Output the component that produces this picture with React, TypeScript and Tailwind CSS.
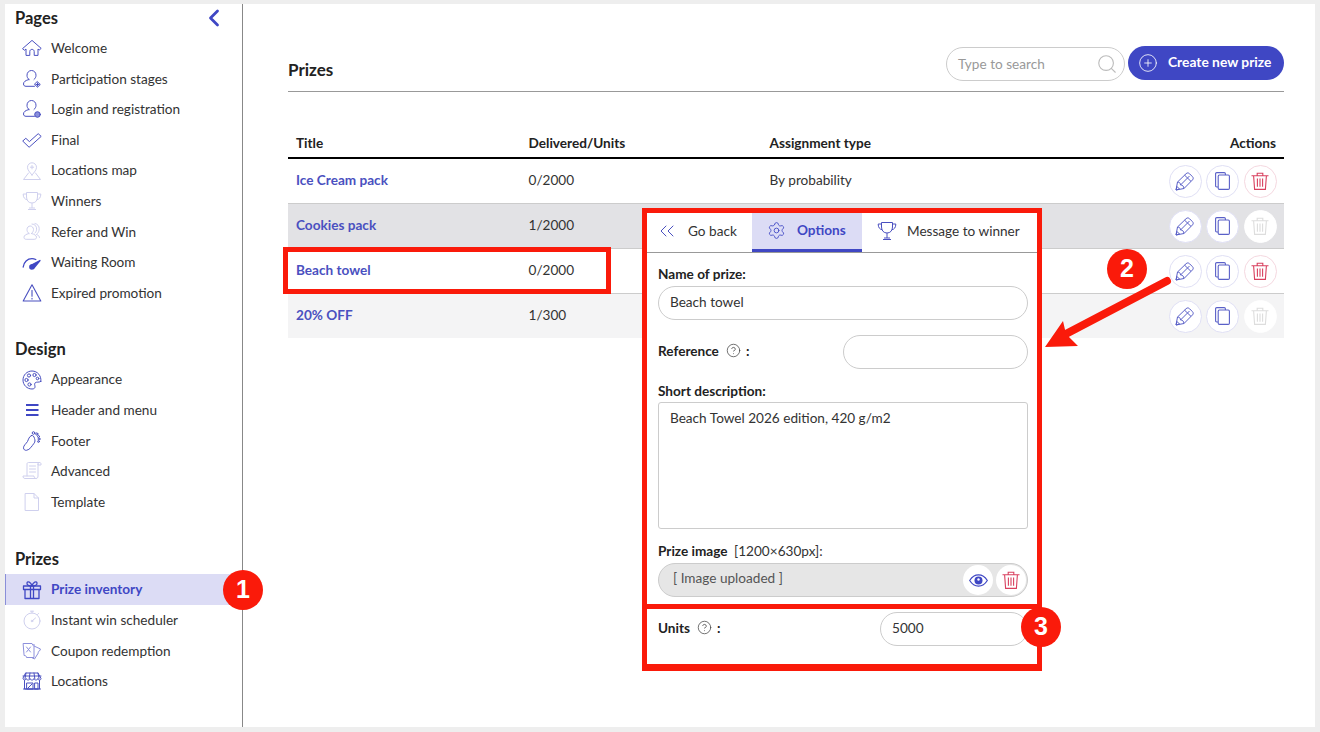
import React from 'react';
import { ChevronLeft, ChevronsLeft, Settings, Search, CirclePlus, CircleHelp } from 'lucide-react';

type IconProps = { className?: string };

const solid = 'text-[#4a50c0]';
const pale = 'text-[#cfd0ee]';

function NavIcon({ className, width = 1, children }: { className: string; width?: number; children: React.ReactNode }) {
  return (
    <svg viewBox="0 0 20 20" className={`h-[20px] w-[20px] ${className}`} fill="none" stroke="currentColor" strokeWidth={width} strokeLinejoin="round" strokeLinecap="round">
      {children}
    </svg>
  );
}

function PencilIcon({ className }: IconProps) {
  return (
    <svg viewBox="0 0 20 20" className={className} fill="none" stroke="currentColor" strokeWidth="1" strokeLinejoin="round">
      <path d="M1 19 2.500 11 11 2.800c1.200-1.200 2.400-1.200 3.600 0l2.800 2.800c1.100 1.100 1.100 2.300 0 3.400L9 17.500Z" />
      <path d="M2.500 11c2 .2 3 1 3 3 2 0 3.200 1 3.500 3.500M5.500 14 14.500 5M9.600 4.200 16 10.400M1 19l3.500-1-2.500-2.500Z" />
    </svg>
  );
}

function CopyIcon({ className }: IconProps) {
  return (
    <svg viewBox="0 0 15 18" className={className} fill="none" stroke="currentColor" strokeWidth="1.100">
      <path d="M3 15H1.800C1 15 .6 14.600 .6 13.800V1.800C.6 1 1 .6 1.800 .6h7.400c.8 0 1.200.4 1.200 1.200V3" />
      <rect x="3.200" y="3" width="11.200" height="14.400" rx="1.200" />
    </svg>
  );
}

function TrashIcon({ className }: IconProps) {
  return (
    <svg viewBox="0 0 20 20" className={className} fill="none" stroke="currentColor" strokeWidth="1.100">
      <path d="M1.500 4.800h17M7.200 4.600V2.200h5.600v2.400M3.600 4.800 4.600 18.400h10.800l1-13.600" />
      <path d="M7.400 7.600v8.200M10 7.600v8.200M12.600 7.600v8.200" />
    </svg>
  );
}

function EyeIcon({ className }: IconProps) {
  return (
    <svg viewBox="0 0 20 14" className={className}>
      <path d="M0.500 7C3 3 6.300 1 10 1s7 2 9.500 6c-2.500 4-5.800 6-9.500 6S3 11 .5 7Z" fill="none" stroke="currentColor" strokeWidth="1.300" />
      <circle cx="10" cy="7" r="4.300" fill="currentColor" />
      <circle cx="10" cy="6" r="1.300" fill="white" />
    </svg>
  );
}

function TrophyIcon({ className }: IconProps) {
  return (
    <svg viewBox="0 0 20 20" className={className} fill="none" stroke="currentColor" strokeWidth="1" strokeLinejoin="round">
      <path d="M4.500 1.500h11V6c0 3.600-2.200 6-5.500 6S4.500 9.600 4.500 6Z" />
      <path d="M4.500 3H1.200c0 3.400 1.400 5.400 4.200 5.800M15.500 3h3.300c0 3.400-1.400 5.400-4.200 5.800M10 12v5M6 18.500h8M7 17h6" />
    </svg>
  );
}

const pages = [
  {
    label: 'Welcome',
    icon: (
      <NavIcon className={solid}>
        <path d="M.8 10.400 10 2.400l9.200 8-2 1.600-1.200-1v6.400h-3.800v-3.800c0-3-4.400-3-4.400 0v3.800H4V11l-1.200 1Z" />
      </NavIcon>
    ),
  },
  {
    label: 'Participation stages',
    icon: (
      <NavIcon className={solid}>
        <path d="M7 10.500C5.600 9.500 5 8 5 6.200 5 3.500 7 1.500 9.500 1.500s4.500 2 4.500 4.700c0 1.800-.7 3.300-2 4.300" />
        <path d="M7 10.500c-3.500.8-5.500 2.300-5.500 4.500 0 1.500 1 2.300 2.500 2.300h8.500" />
        <path d="M15.500 12.800l2.800 2.700-2.800 2.700-2.800-2.700ZM15.500 14v3M14 15.500h3" />
      </NavIcon>
    ),
  },
  {
    label: 'Login and registration',
    icon: (
      <NavIcon className={solid}>
        <path d="M7 10.500C5.600 9.500 5 8 5 6.200 5 3.500 7 1.500 9.500 1.500s4.500 2 4.500 4.700c0 1.800-.7 3.300-2 4.300" />
        <path d="M7 10.500c-3.500.8-5.500 2.300-5.500 4.500 0 1.500 1 2.300 2.500 2.300h8.500" />
        <circle cx="15.500" cy="15.500" r="2.800" fill="#8a8fdc" />
      </NavIcon>
    ),
  },
  {
    label: 'Final',
    icon: (
      <NavIcon className={solid}>
        <path d="M1 10.800 3.800 8.300l3.600 3.300 8.800-7.900 3 2.700L7.400 17Z" />
      </NavIcon>
    ),
  },
  {
    label: 'Locations map',
    icon: (
      <NavIcon className={pale}>
        <path d="M10 14C7.500 11 5.500 8.800 5.500 6.300a4.500 4.500 0 0 1 9 0C14.500 8.800 12.500 11 10 14Z" />
        <path d="M10 4.500v3.400M8.300 6.200h3.400M6.500 12 1.500 18.500h17L13.500 12" />
      </NavIcon>
    ),
  },
  { label: 'Winners', icon: <TrophyIcon className={`h-[20px] w-[20px] ${pale}`} /> },
  {
    label: 'Refer and Win',
    icon: (
      <NavIcon className={pale}>
        <path d="M7 11.500C5.500 10.500 5 9 5 7.500 5 5.500 6.500 4 8.200 4s3.300 1.500 3.300 3.500c0 1.500-.7 3-2 4" />
        <path d="M7 11.500c-3.200.8-5 1.900-5 3.800 0 1.200.7 2 2.200 2h8c1.500 0 2.300-.8 2.300-2 0-1.900-2-3-5-3.800" />
        <path d="M10 2c3 0 4.800 2.400 4.600 5.200-.1 1.500-.5 2.800-1.600 3.800M13 1.500c2.700.5 4.200 2.700 4.200 5.200 0 2-.6 3.600-1.800 4.800M14.500 12.500c1.800.6 3 1.600 3 3" />
      </NavIcon>
    ),
  },
  {
    label: 'Waiting Room',
    icon: (
      <NavIcon className="text-[#3f47c4]" width={1.300}>
        <path d="M1.200 15c.6-5 4.200-8.300 8.800-8.300 1.400 0 2.600.3 3.800.8" />
        <path d="M8.500 13.500 18 8.500l-6.500 8Z" fill="currentColor" />
        <circle cx="9.800" cy="15" r="2" fill="currentColor" />
      </NavIcon>
    ),
  },
  {
    label: 'Expired promotion',
    icon: (
      <NavIcon className={solid} width={1.100}>
        <path d="M10 1.800 18.800 18H1.200Z" />
        <path d="M10 7.500v5.800" />
        <path d="M10 15.200v.8" />
      </NavIcon>
    ),
  },
];

const design = [
  {
    label: 'Appearance',
    icon: (
      <NavIcon className={solid}>
        <path d="M18.800 11.500C19.800 6 15.500 1 10 1 5 1 1 5 1 10s4 9 9 9c2.200 0 3-1 3-2.200 0-1.500-1-2.800.2-4 1.200-1.200 3.800-.1 5.600-1.300Z" />
        <circle cx="7" cy="5.500" r="1.600" />
        <circle cx="12.500" cy="5" r="1.600" />
        <circle cx="4.500" cy="10" r="1.600" />
        <circle cx="7.500" cy="14.500" r="1.600" />
        <circle cx="15.500" cy="8.500" r="1.300" />
      </NavIcon>
    ),
  },
  {
    label: 'Header and menu',
    icon: (
      <NavIcon className="text-[#3f47c4]" width={2}>
        <path d="M4 5h12.500M4 10h12.500M4 15h12.500" strokeLinecap="butt" />
      </NavIcon>
    ),
  },
  {
    label: 'Footer',
    icon: (
      <NavIcon className={solid}>
        <path d="M9.500 4.500C7 5.500 6.500 8.500 5.500 10.500 4 12.800 1.500 14.500 1.500 16.800c0 1.700 1.300 2.700 3 2.500 3.500-.5 5.500-4.500 7.500-7 1.200-1.500 1.200-3 .5-4.800C12 5.500 11 4 9.500 4.500Z" />
        <circle cx="11.500" cy="2" r="1.300" />
        <circle cx="14.800" cy="3" r="1.100" />
        <circle cx="16.500" cy="5.500" r="1" />
        <circle cx="17" cy="8" r="1" />
        <circle cx="16.500" cy="10.500" r=".9" />
      </NavIcon>
    ),
  },
  {
    label: 'Advanced',
    icon: (
      <NavIcon className={pale}>
        <path d="M5 15V3c0-1 .6-1.500 1.500-1.500h11c1 0 1.500.7 1.500 1.500v1h-3V3M17.500 1.500c-1 0-1.500.7-1.500 1.500v12c0 1.500-.6 2.500-2 2.500H3c-1.300 0-2-1-2-2.500h11c0 1 .5 2.500 2 2.500" />
        <path d="M7.500 5h6M7.500 8h6M7.500 11h6" />
      </NavIcon>
    ),
  },
  {
    label: 'Template',
    icon: (
      <NavIcon className={pale}>
        <path d="M3.500 1.500h8.500l4.500 4.500v12.500h-13Z" />
        <path d="M12 1.500V6h4.500" />
      </NavIcon>
    ),
  },
];

const prizes = [
  {
    label: 'Prize inventory',
    icon: (
      <NavIcon className="text-[#3f47c4]" width={1.300}>
        <path d="M1.500 6h17v3.500h-17ZM3 9.500v9h14v-9M8.500 6v12.500M11.500 6v12.500" />
        <path d="M10 6C7 6 4.500 5 5 2.800 5.500.8 9 2 10 6c1-4 4.500-5.200 5-3.200C15.500 5 13 6 10 6Z" />
      </NavIcon>
    ),
    active: true,
  },
  {
    label: 'Instant win scheduler',
    icon: (
      <NavIcon className={pale}>
        <circle cx="10" cy="11" r="8" />
        <path d="M10 3V1.200M8.500 1.200h3M10 11l3.500-3M15.500 4.500l1-1" />
        <circle cx="10" cy="11" r=".8" />
      </NavIcon>
    ),
  },
  {
    label: 'Coupon redemption',
    icon: (
      <NavIcon className="text-[#8d90dc]">
        <path d="M1.500 2.500h8.500l1 1.800 1-1v13.200H4.500c0-1.500-1-2-2-2Z" />
        <path d="M12 5l6.500 3-1 2c-1 0-1.500 1-1.200 2l-3.800 6-3-1.500" />
        <path d="M4.500 6l4 5M8.500 6l-4 5" />
      </NavIcon>
    ),
  },
  {
    label: 'Locations',
    icon: (
      <NavIcon className={solid}>
        <path d="M4 2h12l3 5.500c0 2-3 2-3.200 0 0 2-3.600 2-3.800 0 0 2-3.800 2-4 0 0 2-3.600 2-3.800 0C4 9.500 1 9.500 1 7.500Z" />
        <path d="M4 2 3 7.500M8 2l-.8 5.500M12 2l.8 5.500M16 2l1 5.500M1 5h18M2.500 9.500V18h15V9.500M1.500 18h17" />
        <path d="M5 12h6v6H5ZM13 12h3v6h-3ZM6 17l4-4" />
      </NavIcon>
    ),
  },
];

const rows = [
  { title: 'Ice Cream pack', units: '0/2000', type: 'By probability', cls: 'h-[45px] border-b border-[#ccc] bg-white', canDelete: true },
  { title: 'Cookies pack', units: '1/2000', type: '', cls: 'h-[45px] border-b border-[#ccc] bg-[#e2e2e5]', canDelete: false },
  { title: 'Beach towel', units: '0/2000', type: '', cls: 'h-[45px] border-b border-[#ccc] bg-white', canDelete: true },
  { title: '20% OFF', units: '1/300', type: '', cls: 'h-[44px] bg-[#f4f4f5]', canDelete: false },
];

function NavGroup({ title, items, className }: { title: string; items: { label: string; icon: React.ReactNode; active?: boolean }[]; className?: string }) {
  return (
    <div className={className}>
      <h3 className="flex h-[29px] items-center pl-[10px] text-[16.500px] font-bold text-[#222]">{title}</h3>
      {items.map((item) => (
        <div
          key={item.label}
          className={
            item.active
              ? 'flex h-[30.6px] items-center gap-[9px] border-l border-[#8a8fd8] bg-[#dcdcf5] pl-[16px] text-[13.6px] font-bold text-[#3f47c4]'
              : 'flex h-[30.6px] items-center gap-[9px] pl-[17px] text-[13.6px] text-[#333]'
          }
        >
          <span className="flex w-[20px] justify-center">{item.icon}</span>
          <span>{item.label}</span>
        </div>
      ))}
    </div>
  );
}

function ActionButton({ children, tone }: { children: React.ReactNode; tone?: 'danger' | 'off' }) {
  const toneCls =
    tone === 'danger' ? 'border-[#f5d8e0] bg-white' : tone === 'off' ? 'border-white bg-white' : 'border-[#e0e0f5] bg-white';
  return <button className={`flex h-[33px] w-[33px] items-center justify-center rounded-full border ${toneCls}`}>{children}</button>;
}

function Badge({ n, className }: { n: number; className: string }) {
  return (
    <div
      className={`absolute flex h-[40px] w-[40px] items-center justify-center rounded-full bg-[#fa1a0a] font-['Liberation_Sans',sans-serif] text-[25px] font-bold text-white ${className}`}
    >
      {n}
    </div>
  );
}

export default function App() {
  return (
    <div className="relative h-[732px] w-[1320px] overflow-hidden bg-[#eeeeee] pb-[5px] pl-[5px] pr-[5px] pt-[4px] font-['Lato',sans-serif] text-[#333]">
      <div className="flex h-full bg-white">
        <aside className="relative w-[238px] shrink-0 border-r border-[#888]">
          <ChevronLeft className="absolute left-[195px] top-0 h-[28px] w-[28px] text-[#3f47c4]" strokeWidth={2.400} />
          <NavGroup title="Pages" items={pages} />
          <NavGroup title="Design" items={design} className="mt-[27px]" />
          <NavGroup title="Prizes" items={prizes} className="mt-[28px]" />
        </aside>

        <main className="min-w-0 flex-1 pl-[45px] pr-[31px] pt-[42px]">
          <div className="flex h-[46px] items-start justify-between border-b border-[#999]">
            <h1 className="mt-[15px] text-[17px] font-bold leading-[18px] text-[#222]">Prizes</h1>
            <div className="flex gap-[3px]">
              <div className="mt-[1px] flex h-[34px] w-[179px] items-center justify-between rounded-full border border-[#ccc] pl-[11px] pr-[6px] text-[13.6px] text-[#999]">
                <span>Type to search</span>
                <Search className="h-[22px] w-[22px] text-[#bbb]" strokeWidth={1.200} />
              </div>
              <button className="flex h-[34px] w-[156px] items-center gap-[10px] rounded-full bg-[#3f47c4] pb-[1px] pl-[10px] text-[13.800px] font-bold text-white">
                <CirclePlus className="h-[20px] w-[20px]" strokeWidth={1} />
                Create new prize
              </button>
            </div>
          </div>

          <div className="mt-[37px]">
            <div className="grid h-[30px] grid-cols-[232.5px_241px_1fr_auto] items-center border-b-2 border-black px-2 text-[13.6px] font-bold text-[#222]">
              <span>Title</span>
              <span>Delivered/Units</span>
              <span>Assignment type</span>
              <span>Actions</span>
            </div>
            {rows.map((row) => (
              <div key={row.title} className={`grid grid-cols-[232.5px_241px_1fr_auto] items-center px-2 text-[13.6px] ${row.cls}`}>
                <span className="pb-[2px] font-bold text-[#4a50c0]">{row.title}</span>
                <span className="pb-[2px]">{row.units}</span>
                <span className="pb-[2px]">{row.type}</span>
                <span className="-mr-[0.5px] flex gap-[4.5px]">
                  <ActionButton>
                    <PencilIcon className="h-[20px] w-[20px] text-[#5a60c8]" />
                  </ActionButton>
                  <ActionButton>
                    <CopyIcon className="h-[18px] w-[15px] text-[#5a60c8]" />
                  </ActionButton>
                  <ActionButton tone={row.canDelete ? 'danger' : 'off'}>
                    <TrashIcon className={row.canDelete ? 'h-[20px] w-[20px] text-[#d9405f]' : 'h-[20px] w-[20px] text-[#ddd]'} />
                  </ActionButton>
                </span>
              </div>
            ))}
          </div>
        </main>
      </div>

      {/* edit panel, lies over the table */}
      <div className="absolute left-[642px] top-[208px] w-[400px] bg-white text-[13.6px]">
        <div className="h-[396px] border-[5px] border-b-0 border-[#fa1a0a]">
          <div className="flex h-[40px] border-b border-[#999]">
            <div className="flex w-[105px] items-center gap-[9px] pb-[3px] pl-[8px]">
              <ChevronsLeft className="h-[24px] w-[24px] text-[#4a50c0]" strokeWidth={1} />
              Go back
            </div>
            <div className="flex w-[110px] items-center gap-[11px] border-b-[3px] border-[#3f47c4] bg-[#dcdcf5] pb-[1px] pl-[15px] font-bold text-[#3f47c4]">
              <Settings className="h-[19px] w-[19px]" strokeWidth={1.100} />
              Options
            </div>
            <div className="flex items-center gap-[10px] pb-[3px] pl-[15px]">
              <TrophyIcon className="h-[20px] w-[20px] text-[#4a50c0]" />
              Message to winner
            </div>
          </div>

          <div className="pl-[11px] pr-[9px]">
            <p className="mt-[11px] h-[20px] font-bold leading-[20px] text-[#222]">Name of prize:</p>
            <div className="mt-[2px] flex h-[34px] items-center rounded-full border border-[#ccc] px-[11px] pb-[2px]">Beach towel</div>
            <div className="mt-[15px] flex h-[34px] items-center justify-between">
              <span className="flex items-center gap-[7px] pb-[2px] font-bold text-[#222]">
                Reference <CircleHelp className="h-[15px] w-[15px] text-[#444]" strokeWidth={1.200} /><span className="-ml-[2px]">:</span>
              </span>
              <div className="h-[34px] w-[185px] rounded-full border border-[#ccc]" />
            </div>
            <p className="mt-[12px] h-[20px] font-bold leading-[20px] text-[#222]">Short description:</p>
            <div className="mt-[1px] h-[127px] rounded-[3px] border border-[#ccc] px-[11px] py-[5px]">Beach Towel 2026 edition, 420 g/m2</div>
            <p className="mt-[12px] h-[20px] leading-[20px]">
              <span className="mr-[3px] font-bold text-[#222]">Prize image</span> [1200×630px]:
            </p>
            <div className="mt-[2px] flex h-[34px] items-center justify-between rounded-full border border-[#ccc] bg-[#e6e6e6] pl-[14px] pr-[1px] text-[#555]">
              <span className="pb-[4px]">[ Image uploaded ]</span>
              <span className="flex gap-[3px]">
                <span className="flex h-[30px] w-[30px] items-center justify-center rounded-full bg-white">
                  <EyeIcon className="h-[13px] w-[19px] text-[#3f47c4]" />
                </span>
                <span className="flex h-[30px] w-[30px] items-center justify-center rounded-full bg-white">
                  <TrashIcon className="h-[20px] w-[20px] text-[#d9405f]" />
                </span>
              </span>
            </div>
          </div>
        </div>
        <div className="h-[67px] border-[5px] border-b-[7px] border-[#fa1a0a] pl-[11px] pr-[9px] pt-[3px]">
          <div className="flex h-[34px] items-center justify-between">
            <span className="flex items-center gap-[7px] pb-[2px] font-bold text-[#222]">
              Units <CircleHelp className="h-[15px] w-[15px] text-[#444]" strokeWidth={1.200} /><span className="-ml-[2px]">:</span>
            </span>
            <div className="flex h-[34px] w-[148px] items-center rounded-full border border-[#ccc] px-[11px] pb-[2px]">5000</div>
          </div>
        </div>
      </div>

      {/* annotations */}
      <div className="absolute left-[283px] top-[247px] h-[47px] w-[328px] border-[5px] border-[#fa1a0a]" />
      <svg className="absolute left-0 top-0 h-[732px] w-[1320px]" viewBox="0 0 1320 732" fill="none">
        <path d="M1167 281 1062 336" stroke="#fa1a0a" strokeWidth="8" strokeLinecap="round" />
        <path d="M1045 347 1063 321 1066 334 1078 346Z" fill="#fa1a0a" />
      </svg>
      <Badge n={1} className="left-[223px] top-[570px]" />
      <Badge n={2} className="left-[1107px] top-[249px]" />
      <Badge n={3} className="left-[1021px] top-[607px]" />
    </div>
  );
}
